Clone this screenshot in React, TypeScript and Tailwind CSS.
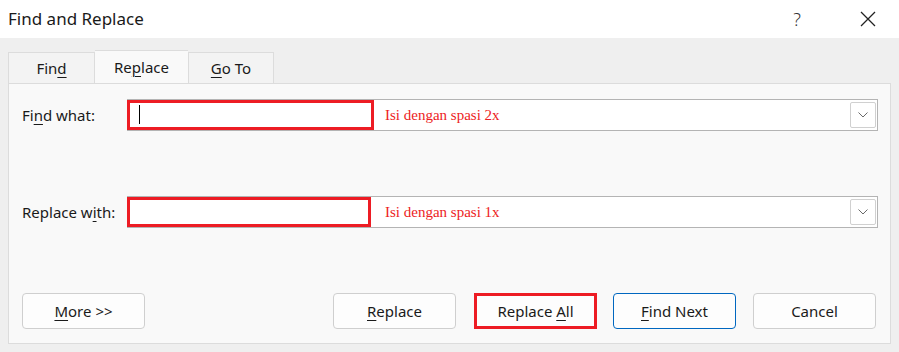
import React from "react";

const ui = { fontFamily: "'Segoe UI', 'Noto Sans', 'Open Sans', sans-serif" };
const serif = { fontFamily: "'Liberation Serif', 'DejaVu Serif', serif" };

// one letter underlined, like an access key
const Key = ({ children }: { children: string }) => (
  <span className="underline underline-offset-[3px] decoration-1">{children}</span>
);

const Combo = ({ hint, boxW, cursor }: { hint: string; boxW: string; cursor?: boolean }) => (
  <div className="relative flex h-[32px] flex-1 items-center border border-[#b4b4b4] bg-white">
    {/* red annotation box over the field */}
    <div className={`absolute left-[-1px] top-[0px] h-[30px] ${boxW} border-[3px] border-[#ed1c24]`} />
    {cursor && <div className="absolute left-[11px] top-[5px] h-[19px] w-px bg-black" />}
    <span className="ml-[257px] text-[15px] text-[#ed1c24]" style={serif}>
      {hint}
    </span>
    <div className="ml-auto mr-[1px] flex h-[26px] w-[26px] items-center justify-center rounded-[2px] border border-[#d0d0d0] bg-white">
      <svg width="10" height="6" viewBox="0 0 10 6">
        <path d="M0.5 0.5 L5 5 L9.5 0.5" fill="none" stroke="#6a6a6a" strokeWidth="1" />
      </svg>
    </div>
  </div>
);

const Btn = ({ children, className = "" }: { children: React.ReactNode; className?: string }) => (
  <div
    className={`flex h-[36px] w-[123px] items-center justify-center rounded-[4px] border border-[#cfcfcf] bg-[#fdfdfd] text-[15px] text-[#1a1a1a] ${className}`}
  >
    <span>{children}</span>
  </div>
);

export default function App() {
  return (
    <div className="flex h-[352px] w-[899px] flex-col bg-[#efefef] text-[#1a1a1a]" style={ui}>
      <div className="flex h-[38px] items-center bg-white pl-[8px]">
        <span className="text-[17px]">Find and Replace</span>
        <span className="ml-auto mr-[59px] text-[18px] font-light text-[#333]">?</span>
        <svg className="mr-[23px]" width="16" height="16" viewBox="0 0 16 16">
          <path d="M1 1 L15 15 M15 1 L1 15" stroke="#222" strokeWidth="1.3" />
        </svg>
      </div>

      <div className="flex flex-1 flex-col px-[8px] pb-[8px] pt-[12px]">
        <div className="flex h-[33px] items-end">
          <div className="flex h-[31px] w-[87px] items-center justify-center border border-b-0 border-[#dcdcdc] bg-[#f3f3f3] text-[15px]">
            <span>
              Fin<Key>d</Key>
            </span>
          </div>
          <div className="flex h-[33px] w-[93px] items-center justify-center border-t border-[#dcdcdc] bg-[#f9f9f9] text-[15px]">
            <span>
              Re<Key>p</Key>lace
            </span>
          </div>
          <div className="flex h-[31px] w-[86px] items-center justify-center border border-b-0 border-[#dcdcdc] bg-[#f3f3f3] text-[15px]">
            <span>
              <Key>G</Key>o To
            </span>
          </div>
        </div>

        <div className="flex flex-1 flex-col border border-[#dcdcdc] bg-[#f9f9f9] pb-[14px] pl-[13px] pr-[12px] pt-[15px]">
          <div className="flex items-center">
            <span className="w-[105px] text-[15px]">
              Fi<Key>n</Key>d what:
            </span>
            <Combo hint="Isi dengan spasi 2x" boxW="w-[247px]" cursor />
          </div>
          <div className="mt-[65px] flex items-center">
            <span className="w-[105px] text-[15px]">
              Replace w<Key>i</Key>th:
            </span>
            <Combo hint="Isi dengan spasi 1x" boxW="w-[244px]" />
          </div>

          <div className="mr-[2px] mt-auto flex items-center">
            <Btn>
              <Key>M</Key>ore &gt;&gt;
            </Btn>
            <Btn className="ml-auto">
              <Key>R</Key>eplace
            </Btn>
            <Btn className="ml-[18px] !rounded-none !border-[3px] !border-[#ed1c24]">
              Replace <Key>A</Key>ll
            </Btn>
            <Btn className="ml-[16px] !border-[#0067c0]">
              <Key>F</Key>ind Next
            </Btn>
            <Btn className="ml-[17px]">Cancel</Btn>
          </div>
        </div>
      </div>
    </div>
  );
}
